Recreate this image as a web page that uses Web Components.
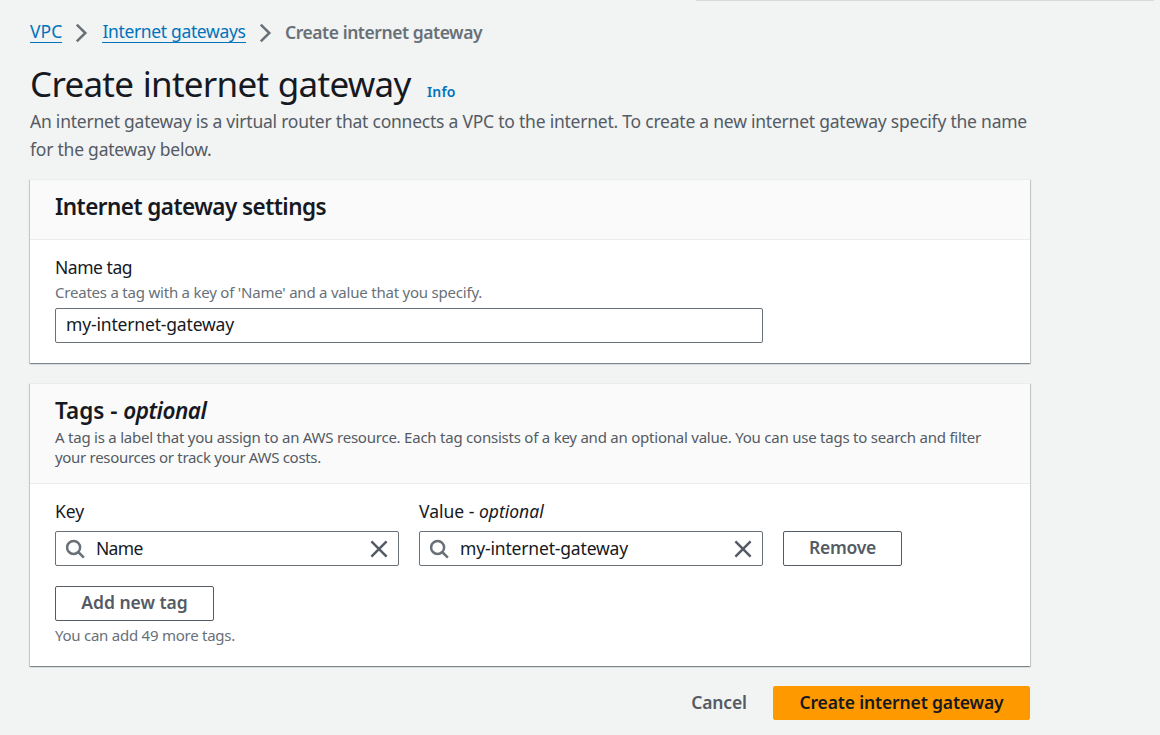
<!DOCTYPE html>
<html lang="en">
<head>
<meta charset="utf-8">
<title>Create internet gateway</title>
<style>
  html, body { margin: 0; height: 735px; overflow: hidden; background: #f2f3f3; }
  body { font-family: "Noto Sans", "Open Sans", sans-serif; font-size: 17.5px; color: #16191f; }
</style>
</head>
<body>
<gateway-page></gateway-page>
<script>
const define = (name, html) => {
  const t = document.createElement('template');
  t.innerHTML = html;
  customElements.define(name, class extends HTMLElement {
    constructor() {
      super();
      this.attachShadow({ mode: 'open' }).append(t.content.cloneNode(true));
    }
  });
};

define('crumb-chevron', `
  <style>:host{display:block;width:14px;height:20px;margin:0 13px} svg{display:block}</style>
  <svg width="14" height="20" viewBox="0 0 14 20" fill="none" stroke="#687078" stroke-width="2.5"><path d="M1.8 1.6 10.3 10 1.8 18.4"/></svg>`);

define('crumb-link', `
  <style>:host{display:block;color:#0073bb} a{display:block;height:20px;line-height:19px;border-bottom:1px solid #0073bb;white-space:nowrap;margin-top:-2px;padding-top:2px}</style>
  <a><slot></slot></a>`);

define('bread-crumbs', `
  <style>
    :host{display:flex;align-items:center;height:29px;padding-top:18px;margin-bottom:13px}
    .here{font-weight:600;color:#687078;letter-spacing:-.45px;line-height:27px;white-space:nowrap;margin:-1px 0 0 -.5px}
  </style>
  <crumb-link style="letter-spacing:.1px">VPC</crumb-link><crumb-chevron></crumb-chevron>
  <crumb-link style="letter-spacing:-.35px">Internet gateways</crumb-link><crumb-chevron></crumb-chevron>
  <span class="here">Create internet gateway</span>`);

define('page-heading', `
  <style>
    :host{display:block}
    .row{display:flex;align-items:baseline;height:47px;line-height:45px;padding-top:1px}
    h1{margin:0;font-size:35px;font-weight:400;letter-spacing:-.72px;word-spacing:1px;white-space:nowrap}
    .info{font-size:14px;font-weight:600;color:#0073bb;margin-left:16.5px;letter-spacing:.1px;line-height:20px}
    p{margin:-1px 0 0;line-height:28px;color:#545b64;white-space:nowrap;letter-spacing:-.23px}
    p span{display:block}
  </style>
  <div class="row"><h1>Create internet gateway</h1><a class="info">Info</a></div>
  <p><span>An internet gateway is a virtual router that connects a VPC to the internet. To create a new internet gateway specify the name</span><span>for the gateway below.</span></p>`);

define('panel-card', `
  <style>
    :host{display:block;background:#fff;box-shadow:0 1px 1px 0 rgba(0,28,36,.3),1px 1px 1px 0 rgba(0,28,36,.15),-1px 1px 1px 0 rgba(0,28,36,.15);border-top:1px solid #eaeded;box-sizing:border-box}
    header{box-sizing:border-box;height:var(--head);border-bottom:1px solid #eaeded;background:#fafafa;padding:12px 25px 0}
    .body{padding:14px 25px 0}
  </style>
  <header><slot name="header"></slot></header><div class="body"><slot></slot></div>`);

define('text-field', `
  <style>
    :host{display:flex;align-items:center;box-sizing:border-box;height:35px;border:1px solid #687078;border-radius:2px;background:#fff;padding:0 10px;letter-spacing:-.17px}
    span{flex:1;white-space:nowrap;line-height:33px;height:35px}
  </style>
  <span><slot></slot></span>`);

define('search-field', `
  <style>
    :host{display:flex;align-items:center;box-sizing:border-box;width:344px;height:35px;border:1px solid #687078;border-radius:2px;background:#fff;padding:0 9px 0 10px;letter-spacing:-.17px}
    span{flex:1;white-space:nowrap;line-height:33px;height:33px;margin-left:10px}
    svg{display:block;flex:none}
  </style>
  <svg width="20" height="20" viewBox="0 0 20 20" fill="none" stroke="#687078" stroke-width="2.5"><circle cx="7.6" cy="8.4" r="6.5"/><path d="m12.2 13 5.7 5.6"/></svg>
  <span><slot></slot></span>
  <svg width="20" height="20" viewBox="0 0 20 20" fill="none" stroke="#545b64" stroke-width="2.5"><path d="m2.4 2.4 15.2 15.2M17.6 2.4 2.4 17.6"/></svg>`);

define('push-button', `
  <style>
    :host{display:block}
    button{display:block;box-sizing:border-box;width:var(--w);height:35px;margin:0;padding:0 0 2px;font:600 17.5px/31px "Noto Sans",sans-serif;letter-spacing:inherit;white-space:nowrap;color:#545b64;background:#fff;border:1px solid #545b64;border-radius:2px}
    :host([kind=primary]) button{height:34px;background:#f90;border-color:#f90;color:#16191f}
    :host([kind=link]) button{height:34px;background:none;border-color:transparent}
  </style>
  <button><slot></slot></button>`);

define('settings-card', `
  <style>
    :host{display:block;margin-top:16px} panel-card{--head:60px;height:184px}
    h2{margin:0;font-size:22.5px;line-height:30px;font-weight:600;letter-spacing:-.55px;white-space:nowrap}
    label{display:block;line-height:27px;letter-spacing:-.47px}
    .hint{font-size:15px;line-height:20px;color:#687078;letter-spacing:-.216px;margin:1px 0 6px}
    text-field{width:708px}
  </style>
  <panel-card>
    <h2 slot="header">Internet gateway settings</h2>
    <label>Name tag</label>
    <div class="hint">Creates a tag with a key of 'Name' and a value that you specify.</div>
    <text-field>my-internet-gateway</text-field>
  </panel-card>`);

define('tags-card', `
  <style>
    :host{display:block;margin-top:20px} panel-card{--head:100px;height:283px}
    h2{margin:0;font-size:22.5px;line-height:30px;font-weight:600;white-space:pre}
    h2 i{letter-spacing:-.5px}
    .sub{font-size:15px;line-height:20px;color:#545b64;white-space:nowrap;margin-top:1px;letter-spacing:-.229px}
    .sub span{display:block} .sub span+span{letter-spacing:-.305px}
    .grid{display:grid;grid-template-columns:344px 344px 119px;column-gap:20px;align-items:end}
    label{display:block;line-height:27px;height:33px;white-space:pre}
    .hint{font-size:15px;line-height:20px;color:#687078;letter-spacing:-.248px;margin-top:4px}
    .add{margin-top:20px;--w:159px}
  </style>
  <panel-card>
    <div slot="header"><h2>Tags - <i>optional</i></h2>
      <div class="sub"><span>A tag is a label that you assign to an AWS resource. Each tag consists of a key and an optional value. You can use tags to search and filter</span><span>your resources or track your AWS costs.</span></div></div>
    <div class="grid">
      <div><label style="letter-spacing:-.1px">Key</label><search-field style="letter-spacing:-.7px">Name</search-field></div>
      <div><label>Value - <i>optional</i></label><search-field>my-internet-gateway</search-field></div>
      <push-button style="--w:119px;letter-spacing:-.27px">Remove</push-button>
    </div>
    <push-button class="add">Add new tag</push-button>
    <div class="hint">You can add 49 more tags.</div>
  </panel-card>`);

define('action-bar', `
  <style>:host{display:flex;justify-content:flex-end;margin-top:20px}</style>
  <push-button kind="link" style="--w:108px;letter-spacing:-.17px">Cancel</push-button>
  <push-button kind="primary" style="--w:257px;letter-spacing:-.15px">Create internet gateway</push-button>`);

define('gateway-page', `
  <style>
    :host{display:block;width:1160px;height:735px;overflow:hidden}
    .edge{height:1px;width:458px;margin-left:696px;background:#d5dbdb;margin-bottom:-1px}
    main{display:block;width:1000px;margin-left:30px}
  </style>
  <div class="edge"></div>
  <main><bread-crumbs></bread-crumbs><page-heading></page-heading><settings-card></settings-card><tags-card></tags-card><action-bar></action-bar></main>`);
</script>
</body>
</html>
